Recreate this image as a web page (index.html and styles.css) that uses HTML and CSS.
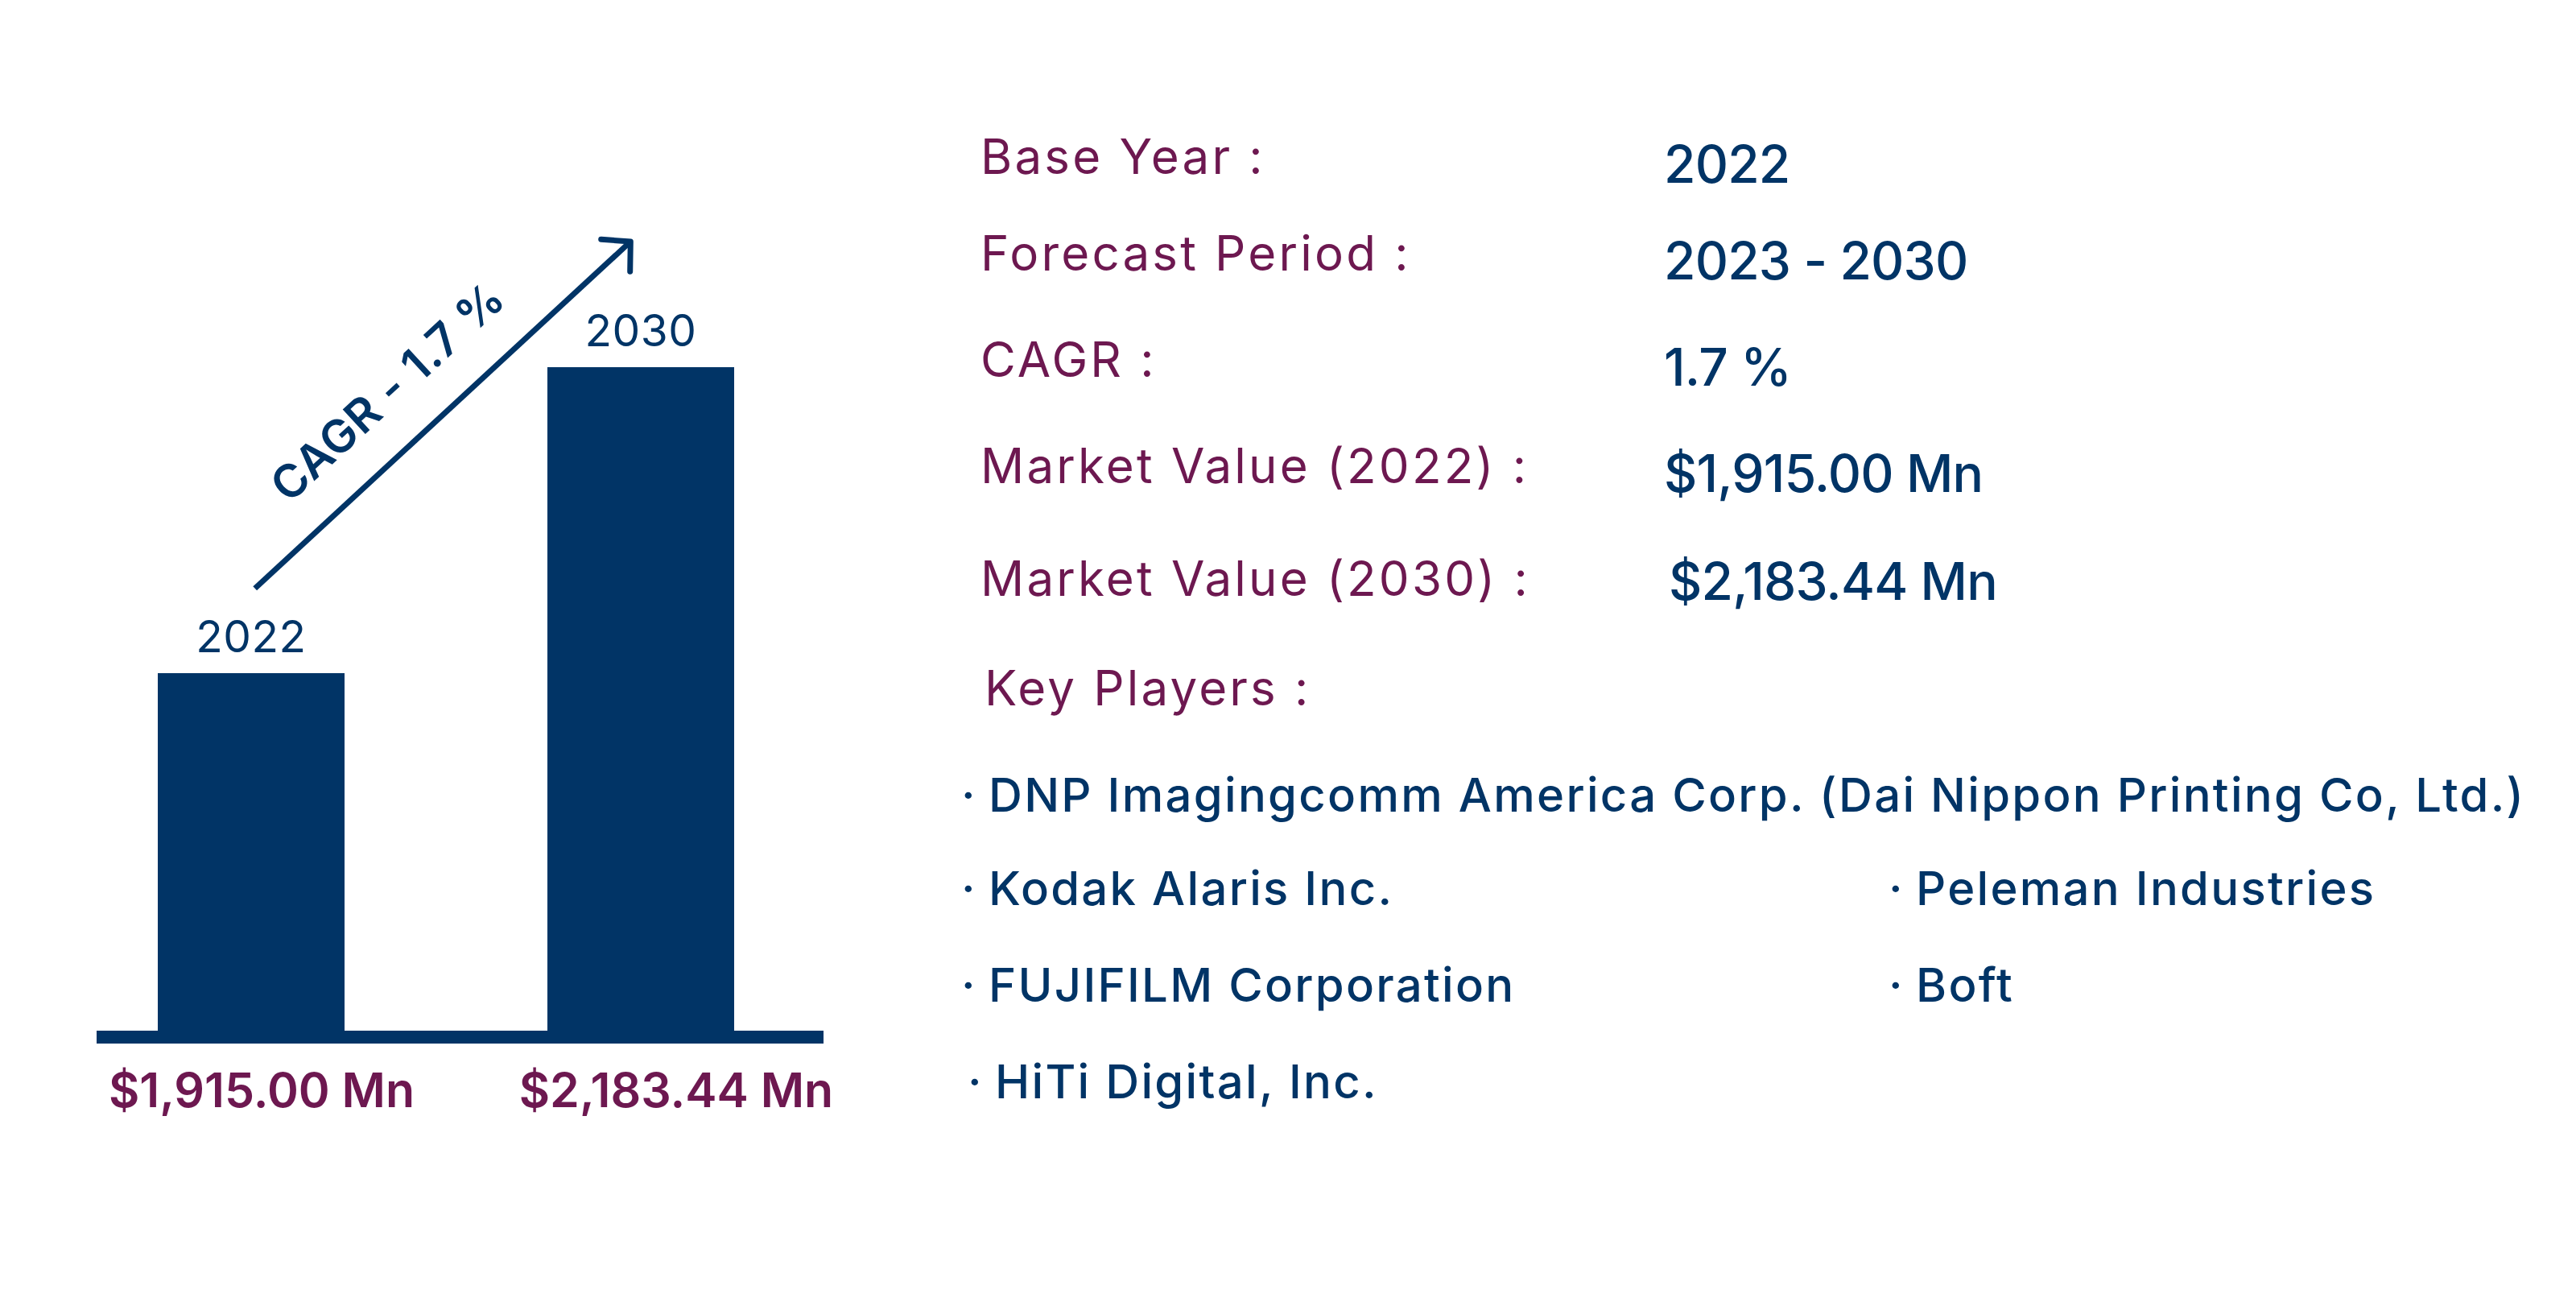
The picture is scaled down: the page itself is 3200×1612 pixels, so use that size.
FILE: index.html
```html
<!DOCTYPE html>
<html lang="en">
<head>
<meta charset="utf-8">
<title>Market Snapshot</title>
<link rel="stylesheet" href="styles.css">
</head>
<body>
<div class="page">
  <section class="chart">
    <div class="plot">
      <div class="bar-col">
        <div class="year">2022</div>
        <div class="bar" style="height:444px"></div>
      </div>
      <div class="bar-col">
        <div class="year">2030</div>
        <div class="bar" style="height:824px"></div>
      </div>
    </div>
    <div class="axis"></div>
    <div class="totals">
      <div class="total">$1,915.00 Mn</div>
      <div class="total">$2,183.44 Mn</div>
    </div>
    <svg class="trend" width="1150" height="800" viewBox="0 0 1150 800" aria-hidden="true">
      <line class="trend-line" x1="316.7" y1="730.7" x2="783" y2="300.3"/>
      <polyline class="trend-head" points="746.7,297.3 783.3,300 782.7,337.3"/>
    </svg>
    <div class="cagr-tag">CAGR - 1.7 %</div>
  </section>

  <section class="info">
    <div class="row row-1"><div class="label">Base Year :</div><div class="value">2022</div></div>
    <div class="row row-2"><div class="label">Forecast Period :</div><div class="value">2023 - 2030</div></div>
    <div class="row row-3"><div class="label">CAGR :</div><div class="value">1.7 %</div></div>
    <div class="row row-4"><div class="label">Market Value (2022) :</div><div class="value">$1,915.00 Mn</div></div>
    <div class="row row-5"><div class="label">Market Value (2030) :</div><div class="value value-late">$2,183.44 Mn</div></div>
    <div class="key">Key Players :</div>
    <div class="players">
      <div class="player lead"><span class="dot">·</span>DNP Imagingcomm America Corp. (Dai Nippon Printing Co, Ltd.)</div>
      <div class="player"><span class="dot">·</span>Kodak Alaris Inc.</div>
      <div class="player"><span class="dot">·</span>Peleman Industries</div>
      <div class="player"><span class="dot">·</span>FUJIFILM Corporation</div>
      <div class="player"><span class="dot">·</span>Boft</div>
      <div class="player indent"><span class="dot">·</span>HiTi Digital, Inc.</div>
    </div>
  </section>
</div>
</body>
</html>
```

FILE: styles.css
```css
* { box-sizing: border-box; }

html, body {
  margin: 0;
  padding: 0;
  background: #ffffff;
}

body {
  font-family: Inter, "Noto Sans", sans-serif;
  color: #013466;
}

.page {
  width: 3200px;
  height: 1612px;
  display: flex;
  overflow: hidden;
  background: #ffffff;
}

/* ---------- chart ---------- */
.chart {
  position: relative;
  width: 1150px;
  flex: none;
  display: flex;
  flex-direction: column;
  padding-top: 300px;
}

.plot {
  height: 980px;
  display: flex;
  align-items: flex-end;
  padding-left: 196px;
  gap: 252px;
}

.bar-col {
  width: 232px;
  display: flex;
  flex-direction: column;
  align-items: center;
}

.year {
  font-size: 55px;
  line-height: 60px;
  font-weight: 400;
  letter-spacing: 0.5px;
  color: #013466;
  margin-bottom: 16px;
}

.bar {
  width: 232px;
  background: #013466;
}

.axis {
  margin-left: 120px;
  width: 903px;
  height: 16px;
  background: #013466;
}

.totals {
  display: flex;
  gap: 15px;
  padding-left: 75px;
  margin-top: 18px;
}

.total {
  width: 500px;
  text-align: center;
  font-size: 59px;
  line-height: 80px;
  font-weight: 600;
  color: #6d1850;
  white-space: nowrap;
}

.trend {
  position: absolute;
  left: 0;
  top: 0;
  overflow: visible;
  pointer-events: none;
}

.trend-line {
  stroke: #013466;
  stroke-width: 7;
  stroke-linecap: butt;
}

.trend-head {
  fill: none;
  stroke: #013466;
  stroke-width: 7;
  stroke-linecap: round;
  stroke-linejoin: round;
}

.cagr-tag {
  position: absolute;
  left: 481px;
  top: 486px;
  transform: translate(-50%, -50%) rotate(-42.7deg);
  font-size: 57px;
  line-height: 1;
  font-weight: 600;
  letter-spacing: 0.8px;
  color: #013466;
  white-space: nowrap;
}

/* ---------- info ---------- */
.info {
  flex: 1;
  padding-top: 154px;
  padding-left: 44px;
}

.row {
  display: flex;
  align-items: flex-start;
  padding-left: 24px;
}

.row-1 { height: 120px; }
.row-2 { height: 132px; }
.row-3 { height: 132px; }
.row-4 { height: 140px; }
.row-5 { height: 136px; }

.label,
.key {
  font-size: 60px;
  line-height: 80px;
  font-weight: 400;
  letter-spacing: 3.2px;
  color: #6d1850;
  white-space: nowrap;
}

.label {
  width: 849px;
  flex: none;
}

.key {
  padding-left: 29px;
  height: 80px;
}

.value {
  font-size: 64px;
  line-height: 80px;
  font-weight: 500;
  letter-spacing: -0.8px;
  color: #013466;
  margin-top: 10px;
  white-space: nowrap;
}

.value-late {
  margin-top: 4px;
  padding-left: 6px;
}

.players {
  margin-top: 53px;
  display: grid;
  grid-template-columns: 1152px auto;
  grid-template-rows: 76px 80px 80px 80px;
  row-gap: 40px;
}

.player {
  font-size: 58px;
  line-height: 80px;
  font-weight: 500;
  letter-spacing: 2.3px;
  color: #013466;
  white-space: nowrap;
}

.player.lead {
  grid-column: 1 / -1;
}

.player.indent {
  padding-left: 8px;
}

.dot {
  display: inline-block;
  width: 34px;
  letter-spacing: 0;
}
```
